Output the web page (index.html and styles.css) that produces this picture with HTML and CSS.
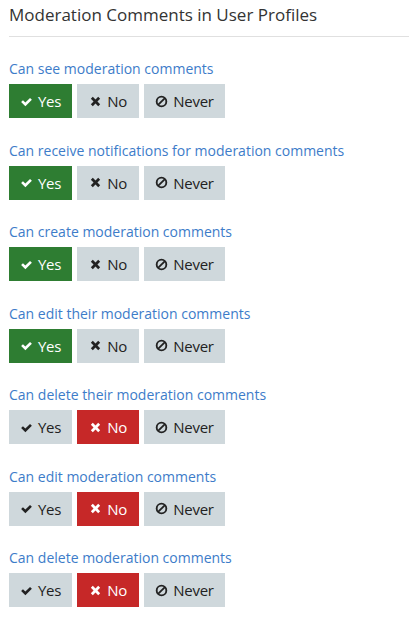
FILE: index.html
```html
<!DOCTYPE html>
<html>
<head>
<meta charset="utf-8">
<link rel="stylesheet" href="styles.css">
</head>
<body>
<div class="panel">
  <h2 class="title">Moderation Comments in User Profiles</h2>
  <div class="perm">
    <div class="label">Can see moderation comments</div>
    <div class="btns">
      <span class="btn yes on"><svg class="ic" viewBox="0 0 14 14"><path d="M1.2 7.6l2-2 2.6 2.6 5-5 2 2-7 7z"/></svg>Yes</span>
      <span class="btn"><svg class="ic" viewBox="0 0 14 14"><path d="M2 4.1l2.1-2.1 2.9 2.9 2.9-2.9 2.1 2.1-2.9 2.9 2.9 2.9-2.1 2.1-2.9-2.9-2.9 2.9-2.1-2.1 2.9-2.9z"/></svg>No</span>
      <span class="btn"><svg class="ic" viewBox="0 0 14 14"><circle cx="7" cy="7" r="5.2" fill="none" stroke="currentColor" stroke-width="2"/><path d="M3.3 10.7L10.7 3.3" stroke="currentColor" stroke-width="2"/></svg>Never</span>
    </div>
  </div>
  <div class="perm">
    <div class="label">Can receive notifications for moderation comments</div>
    <div class="btns">
      <span class="btn yes on"><svg class="ic" viewBox="0 0 14 14"><path d="M1.2 7.6l2-2 2.6 2.6 5-5 2 2-7 7z"/></svg>Yes</span>
      <span class="btn"><svg class="ic" viewBox="0 0 14 14"><path d="M2 4.1l2.1-2.1 2.9 2.9 2.9-2.9 2.1 2.1-2.9 2.9 2.9 2.9-2.1 2.1-2.9-2.9-2.9 2.9-2.1-2.1 2.9-2.9z"/></svg>No</span>
      <span class="btn"><svg class="ic" viewBox="0 0 14 14"><circle cx="7" cy="7" r="5.2" fill="none" stroke="currentColor" stroke-width="2"/><path d="M3.3 10.7L10.7 3.3" stroke="currentColor" stroke-width="2"/></svg>Never</span>
    </div>
  </div>
  <div class="perm">
    <div class="label">Can create moderation comments</div>
    <div class="btns">
      <span class="btn yes on"><svg class="ic" viewBox="0 0 14 14"><path d="M1.2 7.6l2-2 2.6 2.6 5-5 2 2-7 7z"/></svg>Yes</span>
      <span class="btn"><svg class="ic" viewBox="0 0 14 14"><path d="M2 4.1l2.1-2.1 2.9 2.9 2.9-2.9 2.1 2.1-2.9 2.9 2.9 2.9-2.1 2.1-2.9-2.9-2.9 2.9-2.1-2.1 2.9-2.9z"/></svg>No</span>
      <span class="btn"><svg class="ic" viewBox="0 0 14 14"><circle cx="7" cy="7" r="5.2" fill="none" stroke="currentColor" stroke-width="2"/><path d="M3.3 10.7L10.7 3.3" stroke="currentColor" stroke-width="2"/></svg>Never</span>
    </div>
  </div>
  <div class="perm">
    <div class="label">Can edit their moderation comments</div>
    <div class="btns">
      <span class="btn yes on"><svg class="ic" viewBox="0 0 14 14"><path d="M1.2 7.6l2-2 2.6 2.6 5-5 2 2-7 7z"/></svg>Yes</span>
      <span class="btn"><svg class="ic" viewBox="0 0 14 14"><path d="M2 4.1l2.1-2.1 2.9 2.9 2.9-2.9 2.1 2.1-2.9 2.9 2.9 2.9-2.1 2.1-2.9-2.9-2.9 2.9-2.1-2.1 2.9-2.9z"/></svg>No</span>
      <span class="btn"><svg class="ic" viewBox="0 0 14 14"><circle cx="7" cy="7" r="5.2" fill="none" stroke="currentColor" stroke-width="2"/><path d="M3.3 10.7L10.7 3.3" stroke="currentColor" stroke-width="2"/></svg>Never</span>
    </div>
  </div>
  <div class="perm">
    <div class="label">Can delete their moderation comments</div>
    <div class="btns">
      <span class="btn"><svg class="ic" viewBox="0 0 14 14"><path d="M1.2 7.6l2-2 2.6 2.6 5-5 2 2-7 7z"/></svg>Yes</span>
      <span class="btn no on"><svg class="ic" viewBox="0 0 14 14"><path d="M2 4.1l2.1-2.1 2.9 2.9 2.9-2.9 2.1 2.1-2.9 2.9 2.9 2.9-2.1 2.1-2.9-2.9-2.9 2.9-2.1-2.1 2.9-2.9z"/></svg>No</span>
      <span class="btn"><svg class="ic" viewBox="0 0 14 14"><circle cx="7" cy="7" r="5.2" fill="none" stroke="currentColor" stroke-width="2"/><path d="M3.3 10.7L10.7 3.3" stroke="currentColor" stroke-width="2"/></svg>Never</span>
    </div>
  </div>
  <div class="perm">
    <div class="label">Can edit moderation comments</div>
    <div class="btns">
      <span class="btn"><svg class="ic" viewBox="0 0 14 14"><path d="M1.2 7.6l2-2 2.6 2.6 5-5 2 2-7 7z"/></svg>Yes</span>
      <span class="btn no on"><svg class="ic" viewBox="0 0 14 14"><path d="M2 4.1l2.1-2.1 2.9 2.9 2.9-2.9 2.1 2.1-2.9 2.9 2.9 2.9-2.1 2.1-2.9-2.9-2.9 2.9-2.1-2.1 2.9-2.9z"/></svg>No</span>
      <span class="btn"><svg class="ic" viewBox="0 0 14 14"><circle cx="7" cy="7" r="5.2" fill="none" stroke="currentColor" stroke-width="2"/><path d="M3.3 10.7L10.7 3.3" stroke="currentColor" stroke-width="2"/></svg>Never</span>
    </div>
  </div>
  <div class="perm">
    <div class="label">Can delete moderation comments</div>
    <div class="btns">
      <span class="btn"><svg class="ic" viewBox="0 0 14 14"><path d="M1.2 7.6l2-2 2.6 2.6 5-5 2 2-7 7z"/></svg>Yes</span>
      <span class="btn no on"><svg class="ic" viewBox="0 0 14 14"><path d="M2 4.1l2.1-2.1 2.9 2.9 2.9-2.9 2.1 2.1-2.9 2.9 2.9 2.9-2.1 2.1-2.9-2.9-2.9 2.9-2.1-2.1 2.9-2.9z"/></svg>No</span>
      <span class="btn"><svg class="ic" viewBox="0 0 14 14"><circle cx="7" cy="7" r="5.2" fill="none" stroke="currentColor" stroke-width="2"/><path d="M3.3 10.7L10.7 3.3" stroke="currentColor" stroke-width="2"/></svg>Never</span>
    </div>
  </div>
</div>
</body>
</html>
```
FILE: styles.css
```css
html, body {
  margin: 0;
  padding: 0;
  background: #fff;
}
body {
  font-family: "Open Sans", "Noto Sans", sans-serif;
  color: #222;
}
.panel {
  padding: 0 0 0 9px;
}
.title {
  margin: 0;
  padding: 4px 0 10px;
  font-size: 17px;
  font-weight: 400;
  line-height: 22px;
  color: #333;
  border-bottom: 1px solid #e0e0e0;
  margin-bottom: 20px;
}
.perm {
  margin-bottom: 20.5px;
}
.label {
  font-size: 14px;
  line-height: 23px;
  color: #3d7cc9;
  margin-bottom: 4px;
}
.btns {
  display: flex;
  gap: 5px;
}
.btn {
  display: flex;
  align-items: center;
  justify-content: center;
  height: 34px;
  background: #cfd8dc;
  color: #222;
  font-size: 15px;
  letter-spacing: -0.3px;
  gap: 5px;
}
.btn:nth-child(1) { width: 63px; }
.btn:nth-child(2) { width: 62px; }
.btn:nth-child(3) { width: 81px; }
.btn.yes.on { background: #2e7d32; color: #fff; }
.btn.no.on { background: #c62828; color: #fff; }
.ic {
  width: 13px;
  height: 13px;
  fill: currentColor;
  flex: none;
}
```
